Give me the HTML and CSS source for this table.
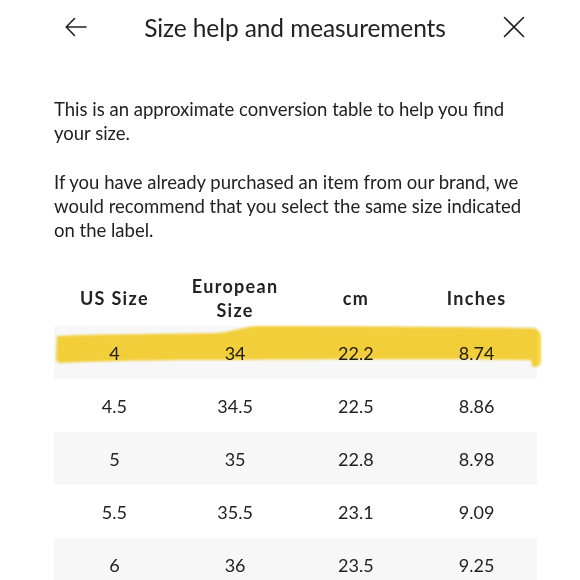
FILE: index.html
```html
<!DOCTYPE html>
<html lang="en">
<head>
<meta charset="utf-8">
<title>Size help and measurements</title>
<link rel="stylesheet" href="styles.css">
</head>
<body>
<header class="topbar">
  <svg class="icon icon-back" width="22" height="20" viewBox="0 0 22 20" aria-hidden="true">
    <path d="M21 10 H1.5 M9.5 1.5 L1.2 10 L9.5 18.5" fill="none" stroke="#222" stroke-width="1.6" stroke-linecap="round" stroke-linejoin="round"/>
  </svg>
  <h1 class="title">Size help and measurements</h1>
  <svg class="icon icon-close" width="22" height="22" viewBox="0 0 22 22" aria-hidden="true">
    <path d="M1.5 1.5 L20.5 20.5 M20.5 1.5 L1.5 20.5" fill="none" stroke="#222" stroke-width="1.6" stroke-linecap="round"/>
  </svg>
</header>
<main class="content">
  <p class="intro">This is an approximate conversion table to help you find your size.</p>
  <p class="intro second">If you have already purchased an item from our brand, we would recommend that you select the same size indicated on the label.</p>
  <div class="table-wrap">
    <table class="sizes">
      <thead>
        <tr><th>US Size</th><th>European<br>Size</th><th>cm</th><th>Inches</th></tr>
      </thead>
      <tbody>
        <tr><td>4</td><td>34</td><td>22.2</td><td>8.74</td></tr>
        <tr><td>4.5</td><td>34.5</td><td>22.5</td><td>8.86</td></tr>
        <tr><td>5</td><td>35</td><td>22.8</td><td>8.98</td></tr>
        <tr><td>5.5</td><td>35.5</td><td>23.1</td><td>9.09</td></tr>
        <tr><td>6</td><td>36</td><td>23.5</td><td>9.25</td></tr>
      </tbody>
    </table>
    <svg class="marker" width="490" height="110" viewBox="-4 0 490 110" aria-hidden="true">
      <defs><filter id="soft" x="-5%" y="-20%" width="110%" height="140%"><feGaussianBlur stdDeviation="0.9"/></filter></defs>
      <path filter="url(#soft)" fill="#fad53c" d="M-1 66 C 40 64, 120 64, 158 63 C 176 62, 182 57, 200 56 C 300 56, 400 57, 472 58 C 479 58, 483 61, 483 67 L 483 91 C 483 97, 476 99, 474 95 L 473 90 C 400 89, 300 89, 150 90 C 100 90, 40 91, 2 93 C -1 93, -2 90, -2 86 Z"/>
    </svg>
  </div>
</main>
</body>
</html>
```

FILE: styles.css
```css
* { box-sizing: border-box; }

html, body {
  margin: 0;
  background: #ffffff;
}

body {
  font-family: Lato, "Open Sans", "Liberation Sans", sans-serif;
  color: #222222;
  width: 580px;
  overflow: hidden;
}

.topbar {
  display: flex;
  align-items: center;
  justify-content: space-between;
  height: 54px;
  padding: 0 55px 0 65px;
}

.icon { display: block; flex: none; }

.title {
  margin: 0;
  font-size: 24.5px;
  font-weight: 400;
  letter-spacing: -0.1px;
  color: #222;
}

.content {
  padding: 0 44px 0 54px;
}

.intro {
  margin: 43px 0 0;
  font-size: 18.5px;
  line-height: 24px;
}

.intro.second {
  margin-top: 25px;
}

.table-wrap {
  position: relative;
  margin-top: 28px;
  width: 483px;
}

.sizes {
  width: 483px;
  border-collapse: collapse;
  table-layout: fixed;
}

.sizes th {
  height: 56px;
  padding: 0;
  font-size: 18px;
  font-weight: 700;
  letter-spacing: 1.3px;
  line-height: 24px;
  text-align: center;
  vertical-align: middle;
}

.sizes td {
  height: 53px;
  padding: 0;
  font-size: 18px;
  text-align: center;
  vertical-align: middle;
}

.sizes tbody tr:nth-child(odd) td {
  background: #f7f7f7;
}

.marker {
  position: absolute;
  left: 0;
  top: 0;
  overflow: visible;
  mix-blend-mode: multiply;
  pointer-events: none;
}
```
